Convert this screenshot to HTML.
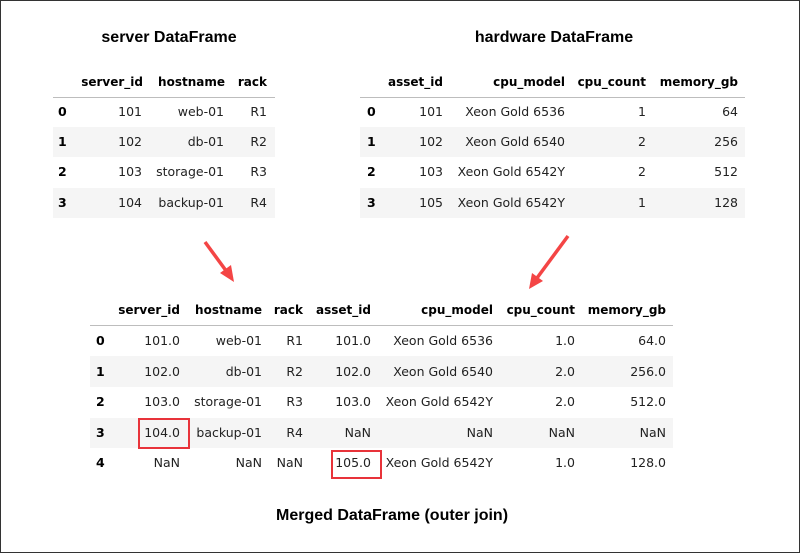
<!DOCTYPE html>
<html><head><meta charset="utf-8"><style>
body{margin:0;width:800px;height:553px;background:#fff;position:relative;overflow:hidden;font-family:"DejaVu Sans","Liberation Sans",sans-serif;color:#222}
#frame{position:absolute;left:0;top:0;width:798px;height:551px;border:1px solid #333}
.t{position:absolute;font-family:"Liberation Sans",sans-serif;font-weight:bold;font-size:16px;color:#000;width:400px;text-align:center;line-height:20px}
.c{position:absolute;width:200px;text-align:right;font-size:12.5px;line-height:18px;white-space:nowrap}
.h{font-weight:bold;color:#000;font-size:12px}
.i{position:absolute;font-size:12.5px;line-height:18px;font-weight:bold;color:#000}
.g{position:absolute;background:#f5f5f5}
.ln{position:absolute;height:1px;background:#bdbdbd}
.box{position:absolute;border:2px solid #e8333a}
</style></head><body>
<div id="frame"></div>
<div class="t" style="left:-31px;top:28px">server DataFrame</div>
<div class="t" style="left:354px;top:28px">hardware DataFrame</div>
<div class="t" style="left:192px;top:506px">Merged DataFrame (outer join)</div>

<!-- server table -->
<div class="g" style="left:53px;top:127px;width:222px;height:30px"></div>
<div class="g" style="left:53px;top:188px;width:222px;height:30px"></div>
<div class="ln" style="left:53px;top:97px;width:222px"></div>
<div class="c h" style="left:-57px;top:73px">server_id</div>
<div class="c h" style="left:25px;top:73px">hostname</div>
<div class="c h" style="left:67px;top:73px">rack</div>
<div class="i" style="left:58px;top:103px">0</div>
<div class="i" style="left:58px;top:133px">1</div>
<div class="i" style="left:58px;top:163px">2</div>
<div class="i" style="left:58px;top:194px">3</div>
<div class="c" style="left:-58px;top:103px">101</div><div class="c" style="left:24px;top:103px">web-01</div><div class="c" style="left:67px;top:103px">R1</div>
<div class="c" style="left:-58px;top:133px">102</div><div class="c" style="left:24px;top:133px">db-01</div><div class="c" style="left:67px;top:133px">R2</div>
<div class="c" style="left:-58px;top:163px">103</div><div class="c" style="left:24px;top:163px">storage-01</div><div class="c" style="left:67px;top:163px">R3</div>
<div class="c" style="left:-58px;top:194px">104</div><div class="c" style="left:24px;top:194px">backup-01</div><div class="c" style="left:67px;top:194px">R4</div>

<!-- hardware table -->
<div class="g" style="left:360px;top:127px;width:385px;height:30px"></div>
<div class="g" style="left:360px;top:188px;width:385px;height:30px"></div>
<div class="ln" style="left:360px;top:97px;width:385px"></div>
<div class="c h" style="left:243px;top:73px">asset_id</div>
<div class="c h" style="left:365px;top:73px">cpu_model</div>
<div class="c h" style="left:446px;top:73px">cpu_count</div>
<div class="c h" style="left:538px;top:73px">memory_gb</div>
<div class="i" style="left:367px;top:103px">0</div>
<div class="i" style="left:367px;top:133px">1</div>
<div class="i" style="left:367px;top:163px">2</div>
<div class="i" style="left:367px;top:194px">3</div>
<div class="c" style="left:243px;top:103px">101</div><div class="c" style="left:365px;top:103px">Xeon Gold 6536</div><div class="c" style="left:446px;top:103px">1</div><div class="c" style="left:538px;top:103px">64</div>
<div class="c" style="left:243px;top:133px">102</div><div class="c" style="left:365px;top:133px">Xeon Gold 6540</div><div class="c" style="left:446px;top:133px">2</div><div class="c" style="left:538px;top:133px">256</div>
<div class="c" style="left:243px;top:163px">103</div><div class="c" style="left:365px;top:163px">Xeon Gold 6542Y</div><div class="c" style="left:446px;top:163px">2</div><div class="c" style="left:538px;top:163px">512</div>
<div class="c" style="left:243px;top:194px">105</div><div class="c" style="left:365px;top:194px">Xeon Gold 6542Y</div><div class="c" style="left:446px;top:194px">1</div><div class="c" style="left:538px;top:194px">128</div>

<!-- arrows -->
<svg style="position:absolute;left:0;top:0" width="800" height="553">
<g stroke="#f44545" stroke-width="3.5" fill="#f44545">
<line x1="205" y1="242" x2="227" y2="272"/>
<line x1="568" y1="236" x2="537" y2="278"/>
</g>
<polygon points="234,282 220,273 231,265" fill="#f44545"/>
<polygon points="529,289 532,273 543,281" fill="#f44545"/>
</svg>

<!-- merged table -->
<div class="g" style="left:90px;top:356px;width:583px;height:31px"></div>
<div class="g" style="left:90px;top:418px;width:583px;height:30px"></div>
<div class="ln" style="left:90px;top:325px;width:583px"></div>
<div class="c h" style="left:-20px;top:301px">server_id</div>
<div class="c h" style="left:62px;top:301px">hostname</div>
<div class="c h" style="left:103px;top:301px">rack</div>
<div class="c h" style="left:171px;top:301px">asset_id</div>
<div class="c h" style="left:293px;top:301px">cpu_model</div>
<div class="c h" style="left:375px;top:301px">cpu_count</div>
<div class="c h" style="left:466px;top:301px">memory_gb</div>
<div class="i" style="left:96px;top:332px">0</div>
<div class="i" style="left:96px;top:363px">1</div>
<div class="i" style="left:96px;top:393px">2</div>
<div class="i" style="left:96px;top:424px">3</div>
<div class="i" style="left:96px;top:454px">4</div>
<div class="c" style="left:-20px;top:332px">101.0</div><div class="c" style="left:62px;top:332px">web-01</div><div class="c" style="left:103px;top:332px">R1</div><div class="c" style="left:171px;top:332px">101.0</div><div class="c" style="left:293px;top:332px">Xeon Gold 6536</div><div class="c" style="left:375px;top:332px">1.0</div><div class="c" style="left:466px;top:332px">64.0</div>
<div class="c" style="left:-20px;top:363px">102.0</div><div class="c" style="left:62px;top:363px">db-01</div><div class="c" style="left:103px;top:363px">R2</div><div class="c" style="left:171px;top:363px">102.0</div><div class="c" style="left:293px;top:363px">Xeon Gold 6540</div><div class="c" style="left:375px;top:363px">2.0</div><div class="c" style="left:466px;top:363px">256.0</div>
<div class="c" style="left:-20px;top:393px">103.0</div><div class="c" style="left:62px;top:393px">storage-01</div><div class="c" style="left:103px;top:393px">R3</div><div class="c" style="left:171px;top:393px">103.0</div><div class="c" style="left:293px;top:393px">Xeon Gold 6542Y</div><div class="c" style="left:375px;top:393px">2.0</div><div class="c" style="left:466px;top:393px">512.0</div>
<div class="c" style="left:-20px;top:424px">104.0</div><div class="c" style="left:62px;top:424px">backup-01</div><div class="c" style="left:103px;top:424px">R4</div><div class="c" style="left:171px;top:424px">NaN</div><div class="c" style="left:293px;top:424px">NaN</div><div class="c" style="left:375px;top:424px">NaN</div><div class="c" style="left:466px;top:424px">NaN</div>
<div class="c" style="left:-20px;top:454px">NaN</div><div class="c" style="left:62px;top:454px">NaN</div><div class="c" style="left:103px;top:454px">NaN</div><div class="c" style="left:171px;top:454px">105.0</div><div class="c" style="left:293px;top:454px">Xeon Gold 6542Y</div><div class="c" style="left:375px;top:454px">1.0</div><div class="c" style="left:466px;top:454px">128.0</div>
<div class="box" style="left:138px;top:418px;width:48px;height:27px"></div>
<div class="box" style="left:331px;top:450px;width:47px;height:25px"></div>
</body></html>
